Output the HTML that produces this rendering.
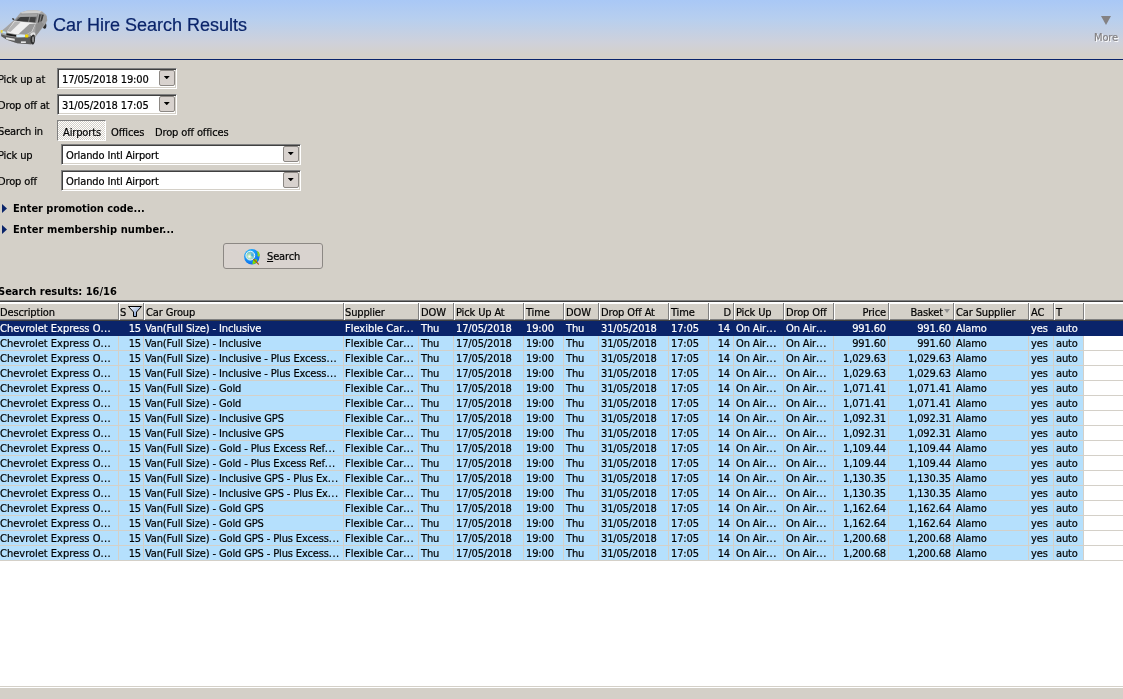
<!DOCTYPE html>
<html lang="en"><head><meta charset="utf-8"><title>Car Hire Search Results</title>
<style>
html,body{margin:0;padding:0}
body{width:1123px;height:699px;overflow:hidden;background:#d4d0c8;position:relative;font:11px "DejaVu Sans Condensed","Liberation Sans",sans-serif;color:#000;letter-spacing:-0.13px;will-change:transform;-webkit-text-stroke:0.2px}
div,span,i{box-sizing:border-box}
.abs{position:absolute}
.hdr{position:absolute;left:0;top:0;width:1123px;height:59px;background:linear-gradient(#a9c8f6 0,#b8cfee 20px,#cfd1da 43px,#d5d1ca 55px)}
.hline{position:absolute;left:0;top:59px;width:1123px;height:1px;background:#0a246a}
.title{letter-spacing:0;position:absolute;left:53px;top:15px;font:18px "Liberation Sans",sans-serif;color:#0a246a;white-space:nowrap;line-height:21px}
.more{position:absolute;left:1094px;top:31px;font-size:11px;color:#848284;text-shadow:1px 1px 0 #fff;line-height:13px}
.moretri{position:absolute;left:1100.5px;top:16px;width:0;height:0;border-left:5.5px solid transparent;border-right:5.5px solid transparent;border-top:9px solid #848284}
.lbl{position:absolute;white-space:nowrap;line-height:13px;height:13px}
.inp{position:absolute;background:#fff;border:1px solid;border-color:#808080 #fff #fff #808080;box-shadow:inset 1px 1px 0 #404040, inset -1px -1px 0 #d4d0c8}
.inp span{position:absolute;left:4px;top:4px;line-height:13px;white-space:nowrap}
.ddb{position:absolute;right:1px;top:1px;width:16px;height:16px;background:#d8d2ce;border:1px solid #8c8884;border-radius:2px}
.ddb:after{content:"";position:absolute;left:3.75px;top:5px;width:6px;height:3.3px;background:#000;clip-path:polygon(0 0,100% 0,50% 100%)}
.tog{position:absolute;line-height:13px;white-space:nowrap}
.togsel{position:absolute;border:1px solid;border-color:#808080 #fff #fff #808080;background:repeating-conic-gradient(#fff 0 25%,#d4d0c8 0 50%) 0 0/2px 2px}
.exp{-webkit-text-stroke:0;position:absolute;font-weight:bold;letter-spacing:0.03px;white-space:nowrap;line-height:13px}
.exptri{position:absolute;width:5px;height:9px}
.btn{position:absolute;left:223px;top:243px;width:100px;height:26px;background:#d9d3cf;border:1px solid #8c8884;border-radius:3px}
.btn u{text-underline-offset:1px;text-decoration-thickness:1px}
.btn span{position:absolute;left:43px;top:6px;line-height:13px}
.btn svg{position:absolute;left:20px;top:5px}
.grid{position:absolute;left:0;top:302px;width:1123px;height:384px;background:#fff;overflow:hidden}
.gtop1{position:absolute;left:0;top:300px;width:1123px;height:1px;background:#808080}
.gtop2{position:absolute;left:0;top:301px;width:1123px;height:1px;background:#404040}
.ghead{position:absolute;left:0;top:0;width:1123px;height:19px;background:#d4d0c8;border-top:2px solid #fff;border-bottom:1px solid #404040}
.hc{position:absolute;top:-1px;height:17px;border-right:1px solid #808080;border-bottom:1px solid #808080;white-space:nowrap;line-height:13px;padding:3px 0 0 0;box-shadow:1px 0 0 #fff}
.hc.r{text-align:right;padding-right:2px}
.funnel{position:absolute;left:8px;top:3px}
.sortarrow{position:absolute;left:54px;top:6px;width:0;height:0;border-left:3.5px solid transparent;border-right:3.5px solid transparent;border-top:4px solid #8e8e8e}
.row{position:absolute;left:0;width:1123px;height:15px;border-bottom:1px solid #d4d0c8}
.row:before{content:"";position:absolute;left:0;top:0;width:1083px;height:14px;background:#b5e0fd}
.row.sel{background:#0a246a;color:#fff;border-bottom-color:#0a246a}
.row.sel:before{display:none}
.c{position:absolute;top:0;height:14px;line-height:13px;padding:1px 0 0 1px;white-space:nowrap;overflow:hidden;border-right:0;box-shadow:1px 0 0 #d4d0c8}
.row.sel .c{box-shadow:none}
.c.r{text-align:right;padding-right:2px}
.statusline{position:absolute;left:0;top:686px;width:1123px;height:1px;background:#d4d0c8}
.status{position:absolute;left:0;top:687px;width:1123px;height:12px;background:#d4d0c8;border-top:1px solid #fff}

.car{position:absolute;left:0;top:4px}
.e{letter-spacing:.45px}
.c.n{letter-spacing:-0.13px;padding-left:1px}
.c.r{letter-spacing:-0.13px}
.c.w{letter-spacing:0}
.c.z{padding-left:0}
.c.d{padding-right:3px}

</style></head>
<body>
<div class="hdr"></div><div class="hline"></div>
<svg class="car" width="56" height="48" viewBox="0 0 816 699">
<ellipse cx="650" cy="318" rx="26" ry="44" fill="#2e2e2e"/>
<path d="M8 405L95 330L180 255L215 225L300 125L400 95L520 90L610 105L675 160L690 235L660 300L620 350L560 420L520 470L500 560L450 590L250 572L100 522L20 470Z" fill="#a4a4a4"/>
<path d="M300 125L400 95L520 90L610 105L570 140L320 142Z" fill="#cfcfcf"/>
<path d="M215 240L310 142L560 138L522 272Z" fill="#7a7a7a"/>
<path d="M305 185L428 185L408 260L235 245Z" fill="#3c3c3c"/><path d="M442 188L524 192L508 268L425 262Z" fill="#424242"/>
<path d="M290 150L548 145L540 182L262 190Z" fill="#a6a6a6"/>
<path d="M572 150L640 158L612 250L548 275Z" fill="#3e3e3e"/><path d="M596 152L612 154L585 262L570 268Z" fill="#8a8a8a"/>
<path d="M640 160L678 175L680 235L625 300Z" fill="#9b9b9b"/>
<path d="M100 400L205 250L522 276L470 400L370 452L250 440Z" fill="#efefef"/>
<path d="M100 398L215 258L300 266L150 408Z" fill="#b4b4b4"/>
<path d="M275 432L430 290L515 284L462 400L370 450Z" fill="#989898"/>
<path d="M110 400L260 430L265 445L105 415Z" fill="#f4f4f4"/>
<path d="M175 205L205 210L210 238L185 232Z" fill="#3a3a3a"/>
<path d="M15 440L90 462L240 488L445 478L455 585L250 572L100 522L20 470Z" fill="#5b5b5b"/>
<path d="M520 300L600 250L640 300L560 420L510 480Z" fill="#8e8e8e"/>
<ellipse cx="476" cy="512" rx="34" ry="78" fill="#2b2b2b"/><ellipse cx="482" cy="515" rx="16" ry="45" fill="#8d8d8d"/>
<path d="M440 440Q470 395 512 420L520 470Q490 420 455 470Z" fill="#e2e2e2"/>
<path d="M95 425L235 452L232 478L92 455Z" fill="#1c1c1c"/>
<path d="M12 385L85 405L88 435L15 420Z" fill="#bfe0f7"/><rect x="10" y="380" width="28" height="38" fill="#e8d23a"/>
<path d="M240 450L365 448L362 486L245 484Z" fill="#d6ecfb"/><rect x="365" y="445" width="48" height="42" rx="8" fill="#f2d500"/>
<path d="M88 485L215 505L215 535L90 512Z" fill="#e6e6e6"/>
<rect x="305" y="545" width="72" height="22" fill="#f2f2f2"/>
</svg>
<div class="title">Car Hire Search Results</div>
<div class="moretri"></div><div class="more">More</div>
<div class="lbl" style="left:-2px;top:73px">Pick up at</div>
<div class="inp" style="left:57px;top:68px;width:120px;height:21px"><span>17/05/2018 19:00</span><i class="ddb"></i></div>
<div class="lbl" style="left:-2px;top:99px">Drop off at</div>
<div class="inp" style="left:57px;top:94px;width:120px;height:21px"><span>31/05/2018 17:05</span><i class="ddb"></i></div>
<div class="lbl" style="left:-2px;top:125px">Search in</div>
<div class="togsel" style="left:57px;top:120px;width:49px;height:21px"></div>
<div class="tog" style="left:63px;top:126px">Airports</div>
<div class="tog" style="left:111px;top:126px">Offices</div>
<div class="tog" style="left:155px;top:126px">Drop off offices</div>
<div class="lbl" style="left:-2px;top:149px">Pick up</div>
<div class="inp" style="left:61px;top:144px;width:240px;height:21px"><span>Orlando Intl Airport</span><i class="ddb"></i></div>
<div class="lbl" style="left:-2px;top:175px">Drop off</div>
<div class="inp" style="left:61px;top:170px;width:240px;height:21px"><span>Orlando Intl Airport</span><i class="ddb"></i></div>
<svg class="exptri" style="left:2px;top:204px" viewBox="0 0 5 9"><polygon points="0,0 5,4.5 0,9" fill="#0a246a"/></svg><div class="exp" style="left:13px;top:202px;letter-spacing:-0.04px">Enter promotion code...</div>
<svg class="exptri" style="left:2px;top:225px" viewBox="0 0 5 9"><polygon points="0,0 5,4.5 0,9" fill="#0a246a"/></svg><div class="exp" style="left:13px;top:223px;letter-spacing:0.07px">Enter membership number...</div>
<div class="btn"><svg width="16" height="16" viewBox="161 134 430 430"><defs><radialGradient id="gl" cx=".35" cy=".3" r=".8"><stop offset="0" stop-color="#28d0ff"/><stop offset=".6" stop-color="#1488f4"/><stop offset="1" stop-color="#0a62e8"/></radialGradient><radialGradient id="ln" cx=".4" cy=".6" r=".6"><stop offset="0" stop-color="#ffffff"/><stop offset=".45" stop-color="#a8dcb0"/><stop offset="1" stop-color="#58b4e0"/></radialGradient></defs><circle cx="372" cy="342" r="208" fill="url(#gl)"/><path d="M500 190L560 215L592 300L560 345L520 320L530 260Z" fill="#8ad818"/><path d="M400 440L470 400L520 420L500 500L440 530L385 545L395 490Z" fill="#7ee000"/><circle cx="330" cy="312" r="118" fill="url(#ln)" stroke="#f4f6fa" stroke-width="26"/><path d="M360 250Q420 260 410 330Q370 350 350 310Z" fill="#30a8f0" opacity=".8"/><path d="M425 415L550 540" stroke="#a85a1c" stroke-width="34" stroke-linecap="round"/></svg><span><u>S</u>earch</span></div>
<div class="lbl" style="left:-2px;top:285px;font-weight:bold;letter-spacing:0;-webkit-text-stroke:0">Search results: 16/16</div>
<div class="gtop1"></div><div class="gtop2"></div>
<div class="grid">
<div class="ghead">
<div class="hc l" style="left:0px;width:119px"><span>Description</span></div>
<div class="hc l" style="left:120px;width:24px"><span>S</span><svg class="funnel" width="14" height="11" viewBox="0 0 14 11"><defs><linearGradient id="fg" x1="0" y1="0" x2="1" y2="1"><stop offset="0" stop-color="#ffffff"/><stop offset="1" stop-color="#5f86c4"/></linearGradient></defs><path d="M0.5 0.5H13.5L8.5 6V10.5H5.5V6Z" fill="url(#fg)" stroke="#000" stroke-width="1"/></svg></div>
<div class="hc l" style="left:145px;width:199px;padding-left:1px"><span>Car Group</span></div>
<div class="hc l" style="left:345px;width:74px"><span>Supplier</span></div>
<div class="hc l" style="left:420px;width:34px;padding-left:1px"><span>DOW</span></div>
<div class="hc l" style="left:455px;width:69px;padding-left:1px"><span>Pick Up At</span></div>
<div class="hc l" style="left:525px;width:39px;padding-left:1px"><span>Time</span></div>
<div class="hc l" style="left:565px;width:34px;padding-left:1px"><span>DOW</span></div>
<div class="hc l" style="left:600px;width:69px;padding-left:1px"><span>Drop Off At</span></div>
<div class="hc l" style="left:670px;width:39px;padding-left:1px"><span>Time</span></div>
<div class="hc r" style="left:710px;width:24px;padding-left:1px"><span>D</span></div>
<div class="hc l" style="left:735px;width:49px;padding-left:1px"><span>Pick Up</span></div>
<div class="hc l" style="left:785px;width:49px;padding-left:1px"><span>Drop Off</span></div>
<div class="hc r" style="left:835px;width:54px;padding-left:1px"><span>Price</span></div>
<div class="hc r" style="left:890px;width:64px;padding-right:10px;padding-left:1px"><span>Basket</span><i class="sortarrow"></i></div>
<div class="hc l" style="left:955px;width:74px;padding-left:1px"><span>Car Supplier</span></div>
<div class="hc l" style="left:1030px;width:24px;padding-left:1px"><span>AC</span></div>
<div class="hc l" style="left:1055px;width:29px;padding-left:1px"><span>T</span></div>
<div class="hc" style="left:1085px;width:38px;border-right:0"></div>
</div>
<div class="row sel" style="top:19px"><span class="c l w z" style="left:0px;width:118px">Chevrolet Express O<span class="e">...</span></span><span class="c r" style="left:120px;width:23px">15</span><span class="c l z" style="left:145px;width:198px">Van(Full Size) - Inclusive</span><span class="c l w z" style="left:345px;width:73px">Flexible Car<span class="e">...</span></span><span class="c l" style="left:420px;width:33px">Thu</span><span class="c l n" style="left:455px;width:68px">17/05/2018</span><span class="c l n" style="left:525px;width:38px">19:00</span><span class="c l" style="left:565px;width:33px">Thu</span><span class="c l n" style="left:600px;width:68px">31/05/2018</span><span class="c l n" style="left:670px;width:38px">17:05</span><span class="c r d" style="left:710px;width:23px">14</span><span class="c l" style="left:735px;width:48px">On Air<span class="e">...</span></span><span class="c l" style="left:785px;width:48px">On Air<span class="e">...</span></span><span class="c r" style="left:835px;width:53px">991.60</span><span class="c r" style="left:890px;width:63px">991.60</span><span class="c l" style="left:955px;width:73px">Alamo</span><span class="c l" style="left:1030px;width:23px">yes</span><span class="c l" style="left:1055px;width:28px">auto</span></div>
<div class="row" style="top:34px"><span class="c l w z" style="left:0px;width:118px">Chevrolet Express O<span class="e">...</span></span><span class="c r" style="left:120px;width:23px">15</span><span class="c l z" style="left:145px;width:198px">Van(Full Size) - Inclusive</span><span class="c l w z" style="left:345px;width:73px">Flexible Car<span class="e">...</span></span><span class="c l" style="left:420px;width:33px">Thu</span><span class="c l n" style="left:455px;width:68px">17/05/2018</span><span class="c l n" style="left:525px;width:38px">19:00</span><span class="c l" style="left:565px;width:33px">Thu</span><span class="c l n" style="left:600px;width:68px">31/05/2018</span><span class="c l n" style="left:670px;width:38px">17:05</span><span class="c r d" style="left:710px;width:23px">14</span><span class="c l" style="left:735px;width:48px">On Air<span class="e">...</span></span><span class="c l" style="left:785px;width:48px">On Air<span class="e">...</span></span><span class="c r" style="left:835px;width:53px">991.60</span><span class="c r" style="left:890px;width:63px">991.60</span><span class="c l" style="left:955px;width:73px">Alamo</span><span class="c l" style="left:1030px;width:23px">yes</span><span class="c l" style="left:1055px;width:28px">auto</span></div>
<div class="row" style="top:49px"><span class="c l w z" style="left:0px;width:118px">Chevrolet Express O<span class="e">...</span></span><span class="c r" style="left:120px;width:23px">15</span><span class="c l z" style="left:145px;width:198px">Van(Full Size) - Inclusive - Plus Excess<span class="e">...</span></span><span class="c l w z" style="left:345px;width:73px">Flexible Car<span class="e">...</span></span><span class="c l" style="left:420px;width:33px">Thu</span><span class="c l n" style="left:455px;width:68px">17/05/2018</span><span class="c l n" style="left:525px;width:38px">19:00</span><span class="c l" style="left:565px;width:33px">Thu</span><span class="c l n" style="left:600px;width:68px">31/05/2018</span><span class="c l n" style="left:670px;width:38px">17:05</span><span class="c r d" style="left:710px;width:23px">14</span><span class="c l" style="left:735px;width:48px">On Air<span class="e">...</span></span><span class="c l" style="left:785px;width:48px">On Air<span class="e">...</span></span><span class="c r" style="left:835px;width:53px">1,029.63</span><span class="c r" style="left:890px;width:63px">1,029.63</span><span class="c l" style="left:955px;width:73px">Alamo</span><span class="c l" style="left:1030px;width:23px">yes</span><span class="c l" style="left:1055px;width:28px">auto</span></div>
<div class="row" style="top:64px"><span class="c l w z" style="left:0px;width:118px">Chevrolet Express O<span class="e">...</span></span><span class="c r" style="left:120px;width:23px">15</span><span class="c l z" style="left:145px;width:198px">Van(Full Size) - Inclusive - Plus Excess<span class="e">...</span></span><span class="c l w z" style="left:345px;width:73px">Flexible Car<span class="e">...</span></span><span class="c l" style="left:420px;width:33px">Thu</span><span class="c l n" style="left:455px;width:68px">17/05/2018</span><span class="c l n" style="left:525px;width:38px">19:00</span><span class="c l" style="left:565px;width:33px">Thu</span><span class="c l n" style="left:600px;width:68px">31/05/2018</span><span class="c l n" style="left:670px;width:38px">17:05</span><span class="c r d" style="left:710px;width:23px">14</span><span class="c l" style="left:735px;width:48px">On Air<span class="e">...</span></span><span class="c l" style="left:785px;width:48px">On Air<span class="e">...</span></span><span class="c r" style="left:835px;width:53px">1,029.63</span><span class="c r" style="left:890px;width:63px">1,029.63</span><span class="c l" style="left:955px;width:73px">Alamo</span><span class="c l" style="left:1030px;width:23px">yes</span><span class="c l" style="left:1055px;width:28px">auto</span></div>
<div class="row" style="top:79px"><span class="c l w z" style="left:0px;width:118px">Chevrolet Express O<span class="e">...</span></span><span class="c r" style="left:120px;width:23px">15</span><span class="c l z" style="left:145px;width:198px">Van(Full Size) - Gold</span><span class="c l w z" style="left:345px;width:73px">Flexible Car<span class="e">...</span></span><span class="c l" style="left:420px;width:33px">Thu</span><span class="c l n" style="left:455px;width:68px">17/05/2018</span><span class="c l n" style="left:525px;width:38px">19:00</span><span class="c l" style="left:565px;width:33px">Thu</span><span class="c l n" style="left:600px;width:68px">31/05/2018</span><span class="c l n" style="left:670px;width:38px">17:05</span><span class="c r d" style="left:710px;width:23px">14</span><span class="c l" style="left:735px;width:48px">On Air<span class="e">...</span></span><span class="c l" style="left:785px;width:48px">On Air<span class="e">...</span></span><span class="c r" style="left:835px;width:53px">1,071.41</span><span class="c r" style="left:890px;width:63px">1,071.41</span><span class="c l" style="left:955px;width:73px">Alamo</span><span class="c l" style="left:1030px;width:23px">yes</span><span class="c l" style="left:1055px;width:28px">auto</span></div>
<div class="row" style="top:94px"><span class="c l w z" style="left:0px;width:118px">Chevrolet Express O<span class="e">...</span></span><span class="c r" style="left:120px;width:23px">15</span><span class="c l z" style="left:145px;width:198px">Van(Full Size) - Gold</span><span class="c l w z" style="left:345px;width:73px">Flexible Car<span class="e">...</span></span><span class="c l" style="left:420px;width:33px">Thu</span><span class="c l n" style="left:455px;width:68px">17/05/2018</span><span class="c l n" style="left:525px;width:38px">19:00</span><span class="c l" style="left:565px;width:33px">Thu</span><span class="c l n" style="left:600px;width:68px">31/05/2018</span><span class="c l n" style="left:670px;width:38px">17:05</span><span class="c r d" style="left:710px;width:23px">14</span><span class="c l" style="left:735px;width:48px">On Air<span class="e">...</span></span><span class="c l" style="left:785px;width:48px">On Air<span class="e">...</span></span><span class="c r" style="left:835px;width:53px">1,071.41</span><span class="c r" style="left:890px;width:63px">1,071.41</span><span class="c l" style="left:955px;width:73px">Alamo</span><span class="c l" style="left:1030px;width:23px">yes</span><span class="c l" style="left:1055px;width:28px">auto</span></div>
<div class="row" style="top:109px"><span class="c l w z" style="left:0px;width:118px">Chevrolet Express O<span class="e">...</span></span><span class="c r" style="left:120px;width:23px">15</span><span class="c l z" style="left:145px;width:198px">Van(Full Size) - Inclusive GPS</span><span class="c l w z" style="left:345px;width:73px">Flexible Car<span class="e">...</span></span><span class="c l" style="left:420px;width:33px">Thu</span><span class="c l n" style="left:455px;width:68px">17/05/2018</span><span class="c l n" style="left:525px;width:38px">19:00</span><span class="c l" style="left:565px;width:33px">Thu</span><span class="c l n" style="left:600px;width:68px">31/05/2018</span><span class="c l n" style="left:670px;width:38px">17:05</span><span class="c r d" style="left:710px;width:23px">14</span><span class="c l" style="left:735px;width:48px">On Air<span class="e">...</span></span><span class="c l" style="left:785px;width:48px">On Air<span class="e">...</span></span><span class="c r" style="left:835px;width:53px">1,092.31</span><span class="c r" style="left:890px;width:63px">1,092.31</span><span class="c l" style="left:955px;width:73px">Alamo</span><span class="c l" style="left:1030px;width:23px">yes</span><span class="c l" style="left:1055px;width:28px">auto</span></div>
<div class="row" style="top:124px"><span class="c l w z" style="left:0px;width:118px">Chevrolet Express O<span class="e">...</span></span><span class="c r" style="left:120px;width:23px">15</span><span class="c l z" style="left:145px;width:198px">Van(Full Size) - Inclusive GPS</span><span class="c l w z" style="left:345px;width:73px">Flexible Car<span class="e">...</span></span><span class="c l" style="left:420px;width:33px">Thu</span><span class="c l n" style="left:455px;width:68px">17/05/2018</span><span class="c l n" style="left:525px;width:38px">19:00</span><span class="c l" style="left:565px;width:33px">Thu</span><span class="c l n" style="left:600px;width:68px">31/05/2018</span><span class="c l n" style="left:670px;width:38px">17:05</span><span class="c r d" style="left:710px;width:23px">14</span><span class="c l" style="left:735px;width:48px">On Air<span class="e">...</span></span><span class="c l" style="left:785px;width:48px">On Air<span class="e">...</span></span><span class="c r" style="left:835px;width:53px">1,092.31</span><span class="c r" style="left:890px;width:63px">1,092.31</span><span class="c l" style="left:955px;width:73px">Alamo</span><span class="c l" style="left:1030px;width:23px">yes</span><span class="c l" style="left:1055px;width:28px">auto</span></div>
<div class="row" style="top:139px"><span class="c l w z" style="left:0px;width:118px">Chevrolet Express O<span class="e">...</span></span><span class="c r" style="left:120px;width:23px">15</span><span class="c l z" style="left:145px;width:198px">Van(Full Size) - Gold - Plus Excess Ref<span class="e">...</span></span><span class="c l w z" style="left:345px;width:73px">Flexible Car<span class="e">...</span></span><span class="c l" style="left:420px;width:33px">Thu</span><span class="c l n" style="left:455px;width:68px">17/05/2018</span><span class="c l n" style="left:525px;width:38px">19:00</span><span class="c l" style="left:565px;width:33px">Thu</span><span class="c l n" style="left:600px;width:68px">31/05/2018</span><span class="c l n" style="left:670px;width:38px">17:05</span><span class="c r d" style="left:710px;width:23px">14</span><span class="c l" style="left:735px;width:48px">On Air<span class="e">...</span></span><span class="c l" style="left:785px;width:48px">On Air<span class="e">...</span></span><span class="c r" style="left:835px;width:53px">1,109.44</span><span class="c r" style="left:890px;width:63px">1,109.44</span><span class="c l" style="left:955px;width:73px">Alamo</span><span class="c l" style="left:1030px;width:23px">yes</span><span class="c l" style="left:1055px;width:28px">auto</span></div>
<div class="row" style="top:154px"><span class="c l w z" style="left:0px;width:118px">Chevrolet Express O<span class="e">...</span></span><span class="c r" style="left:120px;width:23px">15</span><span class="c l z" style="left:145px;width:198px">Van(Full Size) - Gold - Plus Excess Ref<span class="e">...</span></span><span class="c l w z" style="left:345px;width:73px">Flexible Car<span class="e">...</span></span><span class="c l" style="left:420px;width:33px">Thu</span><span class="c l n" style="left:455px;width:68px">17/05/2018</span><span class="c l n" style="left:525px;width:38px">19:00</span><span class="c l" style="left:565px;width:33px">Thu</span><span class="c l n" style="left:600px;width:68px">31/05/2018</span><span class="c l n" style="left:670px;width:38px">17:05</span><span class="c r d" style="left:710px;width:23px">14</span><span class="c l" style="left:735px;width:48px">On Air<span class="e">...</span></span><span class="c l" style="left:785px;width:48px">On Air<span class="e">...</span></span><span class="c r" style="left:835px;width:53px">1,109.44</span><span class="c r" style="left:890px;width:63px">1,109.44</span><span class="c l" style="left:955px;width:73px">Alamo</span><span class="c l" style="left:1030px;width:23px">yes</span><span class="c l" style="left:1055px;width:28px">auto</span></div>
<div class="row" style="top:169px"><span class="c l w z" style="left:0px;width:118px">Chevrolet Express O<span class="e">...</span></span><span class="c r" style="left:120px;width:23px">15</span><span class="c l z" style="left:145px;width:198px">Van(Full Size) - Inclusive GPS - Plus Ex<span class="e">...</span></span><span class="c l w z" style="left:345px;width:73px">Flexible Car<span class="e">...</span></span><span class="c l" style="left:420px;width:33px">Thu</span><span class="c l n" style="left:455px;width:68px">17/05/2018</span><span class="c l n" style="left:525px;width:38px">19:00</span><span class="c l" style="left:565px;width:33px">Thu</span><span class="c l n" style="left:600px;width:68px">31/05/2018</span><span class="c l n" style="left:670px;width:38px">17:05</span><span class="c r d" style="left:710px;width:23px">14</span><span class="c l" style="left:735px;width:48px">On Air<span class="e">...</span></span><span class="c l" style="left:785px;width:48px">On Air<span class="e">...</span></span><span class="c r" style="left:835px;width:53px">1,130.35</span><span class="c r" style="left:890px;width:63px">1,130.35</span><span class="c l" style="left:955px;width:73px">Alamo</span><span class="c l" style="left:1030px;width:23px">yes</span><span class="c l" style="left:1055px;width:28px">auto</span></div>
<div class="row" style="top:184px"><span class="c l w z" style="left:0px;width:118px">Chevrolet Express O<span class="e">...</span></span><span class="c r" style="left:120px;width:23px">15</span><span class="c l z" style="left:145px;width:198px">Van(Full Size) - Inclusive GPS - Plus Ex<span class="e">...</span></span><span class="c l w z" style="left:345px;width:73px">Flexible Car<span class="e">...</span></span><span class="c l" style="left:420px;width:33px">Thu</span><span class="c l n" style="left:455px;width:68px">17/05/2018</span><span class="c l n" style="left:525px;width:38px">19:00</span><span class="c l" style="left:565px;width:33px">Thu</span><span class="c l n" style="left:600px;width:68px">31/05/2018</span><span class="c l n" style="left:670px;width:38px">17:05</span><span class="c r d" style="left:710px;width:23px">14</span><span class="c l" style="left:735px;width:48px">On Air<span class="e">...</span></span><span class="c l" style="left:785px;width:48px">On Air<span class="e">...</span></span><span class="c r" style="left:835px;width:53px">1,130.35</span><span class="c r" style="left:890px;width:63px">1,130.35</span><span class="c l" style="left:955px;width:73px">Alamo</span><span class="c l" style="left:1030px;width:23px">yes</span><span class="c l" style="left:1055px;width:28px">auto</span></div>
<div class="row" style="top:199px"><span class="c l w z" style="left:0px;width:118px">Chevrolet Express O<span class="e">...</span></span><span class="c r" style="left:120px;width:23px">15</span><span class="c l z" style="left:145px;width:198px">Van(Full Size) - Gold GPS</span><span class="c l w z" style="left:345px;width:73px">Flexible Car<span class="e">...</span></span><span class="c l" style="left:420px;width:33px">Thu</span><span class="c l n" style="left:455px;width:68px">17/05/2018</span><span class="c l n" style="left:525px;width:38px">19:00</span><span class="c l" style="left:565px;width:33px">Thu</span><span class="c l n" style="left:600px;width:68px">31/05/2018</span><span class="c l n" style="left:670px;width:38px">17:05</span><span class="c r d" style="left:710px;width:23px">14</span><span class="c l" style="left:735px;width:48px">On Air<span class="e">...</span></span><span class="c l" style="left:785px;width:48px">On Air<span class="e">...</span></span><span class="c r" style="left:835px;width:53px">1,162.64</span><span class="c r" style="left:890px;width:63px">1,162.64</span><span class="c l" style="left:955px;width:73px">Alamo</span><span class="c l" style="left:1030px;width:23px">yes</span><span class="c l" style="left:1055px;width:28px">auto</span></div>
<div class="row" style="top:214px"><span class="c l w z" style="left:0px;width:118px">Chevrolet Express O<span class="e">...</span></span><span class="c r" style="left:120px;width:23px">15</span><span class="c l z" style="left:145px;width:198px">Van(Full Size) - Gold GPS</span><span class="c l w z" style="left:345px;width:73px">Flexible Car<span class="e">...</span></span><span class="c l" style="left:420px;width:33px">Thu</span><span class="c l n" style="left:455px;width:68px">17/05/2018</span><span class="c l n" style="left:525px;width:38px">19:00</span><span class="c l" style="left:565px;width:33px">Thu</span><span class="c l n" style="left:600px;width:68px">31/05/2018</span><span class="c l n" style="left:670px;width:38px">17:05</span><span class="c r d" style="left:710px;width:23px">14</span><span class="c l" style="left:735px;width:48px">On Air<span class="e">...</span></span><span class="c l" style="left:785px;width:48px">On Air<span class="e">...</span></span><span class="c r" style="left:835px;width:53px">1,162.64</span><span class="c r" style="left:890px;width:63px">1,162.64</span><span class="c l" style="left:955px;width:73px">Alamo</span><span class="c l" style="left:1030px;width:23px">yes</span><span class="c l" style="left:1055px;width:28px">auto</span></div>
<div class="row" style="top:229px"><span class="c l w z" style="left:0px;width:118px">Chevrolet Express O<span class="e">...</span></span><span class="c r" style="left:120px;width:23px">15</span><span class="c l z" style="left:145px;width:198px">Van(Full Size) - Gold GPS - Plus Excess<span class="e">...</span></span><span class="c l w z" style="left:345px;width:73px">Flexible Car<span class="e">...</span></span><span class="c l" style="left:420px;width:33px">Thu</span><span class="c l n" style="left:455px;width:68px">17/05/2018</span><span class="c l n" style="left:525px;width:38px">19:00</span><span class="c l" style="left:565px;width:33px">Thu</span><span class="c l n" style="left:600px;width:68px">31/05/2018</span><span class="c l n" style="left:670px;width:38px">17:05</span><span class="c r d" style="left:710px;width:23px">14</span><span class="c l" style="left:735px;width:48px">On Air<span class="e">...</span></span><span class="c l" style="left:785px;width:48px">On Air<span class="e">...</span></span><span class="c r" style="left:835px;width:53px">1,200.68</span><span class="c r" style="left:890px;width:63px">1,200.68</span><span class="c l" style="left:955px;width:73px">Alamo</span><span class="c l" style="left:1030px;width:23px">yes</span><span class="c l" style="left:1055px;width:28px">auto</span></div>
<div class="row" style="top:244px"><span class="c l w z" style="left:0px;width:118px">Chevrolet Express O<span class="e">...</span></span><span class="c r" style="left:120px;width:23px">15</span><span class="c l z" style="left:145px;width:198px">Van(Full Size) - Gold GPS - Plus Excess<span class="e">...</span></span><span class="c l w z" style="left:345px;width:73px">Flexible Car<span class="e">...</span></span><span class="c l" style="left:420px;width:33px">Thu</span><span class="c l n" style="left:455px;width:68px">17/05/2018</span><span class="c l n" style="left:525px;width:38px">19:00</span><span class="c l" style="left:565px;width:33px">Thu</span><span class="c l n" style="left:600px;width:68px">31/05/2018</span><span class="c l n" style="left:670px;width:38px">17:05</span><span class="c r d" style="left:710px;width:23px">14</span><span class="c l" style="left:735px;width:48px">On Air<span class="e">...</span></span><span class="c l" style="left:785px;width:48px">On Air<span class="e">...</span></span><span class="c r" style="left:835px;width:53px">1,200.68</span><span class="c r" style="left:890px;width:63px">1,200.68</span><span class="c l" style="left:955px;width:73px">Alamo</span><span class="c l" style="left:1030px;width:23px">yes</span><span class="c l" style="left:1055px;width:28px">auto</span></div>
</div>
<div class="statusline"></div><div class="status"></div>
</body></html>
